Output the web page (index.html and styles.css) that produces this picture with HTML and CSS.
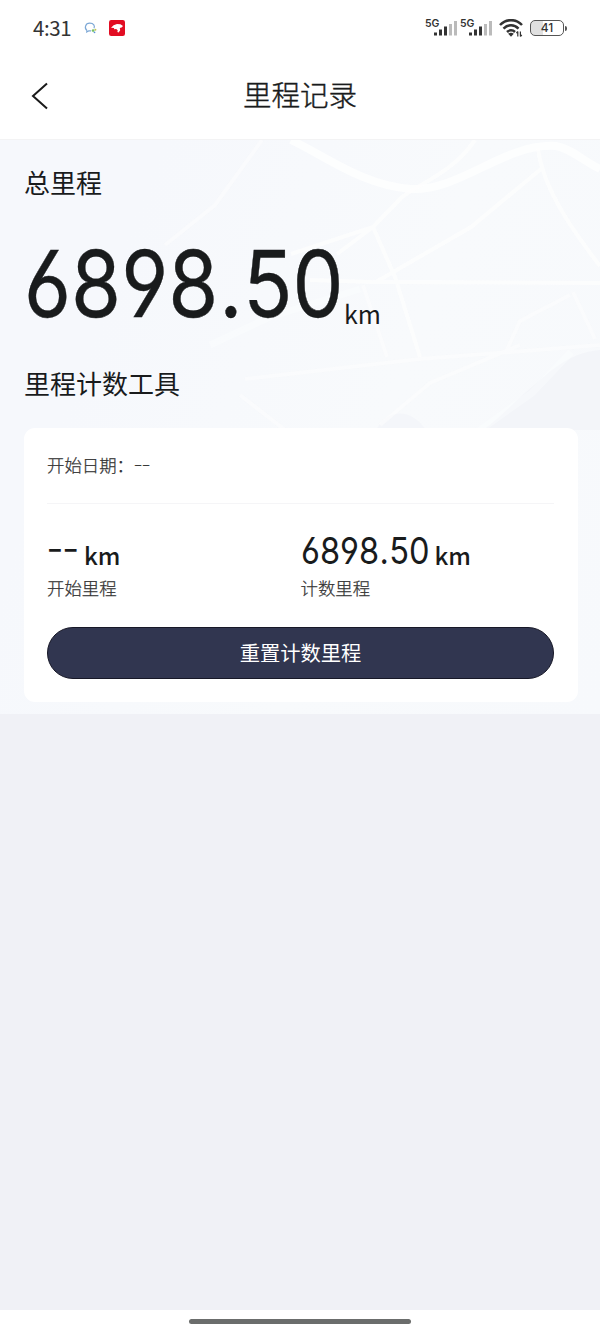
FILE: index.html
```
<!DOCTYPE html>
<html lang="zh-CN">
<head>
<meta charset="utf-8">
<title>里程记录</title>
<link rel="stylesheet" href="styles.css">
</head>
<body>
<div class="screen">
  <div class="status">
    <span class="time">4:31</span>
    <svg class="chat" width="13" height="12" viewBox="0 0 13 12" fill="none"><path d="M3 8.5C.2 6.5 1 1.2 5.8 1.2c4 0 5.3 2.6 4.2 5" stroke="#7da8d6" stroke-width="1.2"/><path d="M3 8.3 2.7 10l2-1.1h2.4" stroke="#7da8d6" stroke-width="1.1"/><circle cx="9.1" cy="8.6" r="1.3" fill="#76bf65"/><circle cx="11.4" cy="7.8" r="1" fill="#c4c454"/><circle cx="10.5" cy="10.3" r=".9" fill="#5b96d4"/></svg>
    <svg class="app" width="16" height="16" viewBox="0 0 16 16"><rect width="16" height="16" rx="2.2" fill="#e20d23"/><path d="M2 7.8 4.6 5.2 8 4l3.4.2L14 6l-1.4 1.5-1.8.4.4 2.4-1.6 2.2-1.2-.5.3-1.7-1.5-1.4-2.3.3.3-1.2z" fill="#fff"/></svg>
    <div class="radio">
      <div class="signal"><span>5G</span><svg width="24" height="20" viewBox="8 0 24 20"><g fill="#333"><rect x="9" y="14.5" width="3" height="3"/><rect x="14" y="11.5" width="3" height="6"/><rect x="19" y="8.5" width="3" height="9"/></g><g fill="#bbb"><rect x="24" y="6" width="3" height="11.5"/><rect x="29" y="3" width="3" height="14.5"/></g></svg></div>
      <div class="signal"><span>5G</span><svg width="24" height="20" viewBox="8 0 24 20"><g fill="#333"><rect x="9" y="14.5" width="3" height="3"/><rect x="14" y="11.5" width="3" height="6"/><rect x="19" y="8.5" width="3" height="9"/></g><g fill="#bbb"><rect x="24" y="6" width="3" height="11.5"/><rect x="29" y="3" width="3" height="14.5"/></g></svg></div>
    </div>
    <svg class="wifi" width="24" height="18" viewBox="0 0 24 18" fill="none" stroke="#333" stroke-width="2.5"><path d="M1 6C7-.5 17-.5 23 6M4.5 9.6c4.3-4.5 10.7-4.5 15 0M8 13c2.2-2.2 5.8-2.2 8 0"/><path d="m12 17.8-2.8-3c1.7-1.4 3.9-1.4 5.6 0z" fill="#333" stroke="none"/><path d="M18.8 17.5v-5m-1.4 1.7 1.4-1.7M21.4 12.5v5m1.4-1.7-1.4 1.7" stroke-width="1.2"/></svg>
    <div class="battery">41</div>
    <i class="cap"></i>
  </div>
  <header class="nav">
    <svg width="18" height="28" viewBox="0 0 18 28" fill="none" stroke="#1a1a1a" stroke-width="2"><path d="M16 1.5 2 14l14 12.5"/></svg>
    <h1>里程记录</h1>
  </header>
  <main class="panel">
    <svg class="map" width="600" height="290" viewBox="0 0 600 290" fill="none" stroke="#fdfefe" aria-hidden="true">
      <path d="M600 210c-35 3-53 25-75 43-14 12-25 25-42 37h117z" fill="#f3f5f9" stroke="none"/>
      <path d="M376 290c12-22 35-22 50 0z" fill="#f4f6fa" stroke="none"/>
      <path d="M291 0c36 17 71 45 120 49 50 2 93-46 145-43 16 3 27 15 44 23" stroke-width="8"/>
      <path d="M475 0c-22 32-51 41-73 57l-29 30-82 27M373 87l-36 27M373 87l22 50 25 80M600 143 372 142 310 140M376 142l95-55 70-58M538 8c5 44 42 92 62 118" stroke-width="4" opacity=".75"/>
      <path d="m363 145 24 72M570 155l-50 26-15 33M573 152l22 47M600 205l-180 14-175 20M262 0l-47 65-50 40M240 255l45 35M380 285l50-42 90-38" stroke-width="4" opacity=".5"/>
      <path d="m480 290 52-37 39-41M210 205l60-28 90-28" stroke-width="7" opacity=".35"/>
    </svg>
    <h2>总里程</h2>
    <div class="total"><span class="figure">6898<span class="dot">.</span>50</span><span class="unit">km</span></div>
    <h2>里程计数工具</h2>
    <section class="card">
      <p class="date">开始日期：<span>--</span></p>
      <div class="stats">
        <div><div class="value"><span class="none">--</span><b>km</b></div><p class="label">开始里程</p></div>
        <div><div class="value"><span class="number">6898<span class="dot">.</span>50</span><b>km</b></div><p class="label">计数里程</p></div>
      </div>
      <button class="reset">重置计数里程</button>
    </section>
  </main>
  <footer class="home"><i></i></footer>
</div>
</body>
</html>
```
FILE: styles.css
```
* { box-sizing: border-box; }
body, h1, h2, p { margin: 0; }
body { font-family: "Noto Sans CJK SC", sans-serif; color: #191b1c; }
.screen { width: 600px; height: 1333px; display: flex; flex-direction: column; background: #f0f1f6; overflow: hidden; }
.status { height: 56px; flex: none; display: flex; align-items: center; padding: 0 35px 0 33px; background: #fff; }
.time { width: 51px; margin-top: -2px; font-size: 20.5px; line-height: 30px; color: #333; letter-spacing: -.4px; }
.app { margin-left: 12px; }
.radio { display: flex; gap: 3px; margin-left: auto; }
.signal { width: 32px; display: flex; align-items: flex-start; }
.signal span { width: 8px; flex: none; margin-top: -3px; font: 600 10.5px/17px Inter, sans-serif; color: #333; }
.signal svg { flex: none; }
.wifi { margin: 0 7px 0 7px; }
.battery { width: 34px; height: 16px; border: 1.5px solid #555; border-radius: 5px; font: 500 12px/13px Inter, sans-serif; text-align: center; color: #333; background: linear-gradient(90deg, #e0e0e0 38%, #fff 38%); }
.cap { width: 2px; height: 5px; margin: 0 -2px 0 1px; background: #555; border-radius: 0 2px 2px 0; }
.nav { height: 84px; flex: none; display: grid; grid-template-columns: 60px 1fr 60px; background: #fff; border-bottom: 1px solid #f3f3f4; }
.nav svg { margin: 26px 0 0 31px; }
h1 { font-size: 28.5px; line-height: 42px; font-weight: 300; text-align: center; padding-top: 17px; -webkit-text-stroke: .4px; }
.panel { position: relative; height: 574px; flex: none; padding: 23px 22px 0 24px; background: linear-gradient(110deg, #f6f8fc 20%, #f8fafc 60%, #f7f9fc); }
.panel > * { position: relative; }
.panel > .map { position: absolute; top: 0; left: 0; }
h2 { font-size: 26px; line-height: 38px; font-weight: 400; }
.total { height: 163px; display: flex; line-height: 163px; }
.figure, .number { font-family: Inter, sans-serif; font-feature-settings: "cv03", "cv04"; transform: scaleX(.88); transform-origin: left; white-space: nowrap; }
.dot { margin: 0 .01em; }
.figure { width: 320px; padding-top: 1px; font-size: 92px; -webkit-text-stroke: .4px; }
.unit { font-size: 25px; padding-top: 31px; }
.card { height: 274px; margin-top: 26px; padding: 0 24px 0 23px; border-radius: 11px; background: #fff; }
.date { height: 76px; padding-top: 24px; font-size: 17.4px; line-height: 26px; font-weight: 300; border-bottom: 1px solid #f5f5f7; color: #333; -webkit-text-stroke: .25px; }
.date span { display: inline-block; transform: scaleX(1.4) translateY(-2px); transform-origin: left; }
.stats { display: grid; grid-template-columns: 1fr 1fr; height: 123px; padding-top: 24px; }
.value { height: 47px; display: flex; line-height: 47px; }
.value b { font-size: 24px; line-height: 53px; font-weight: 500; }
.none { width: 37px; font-size: 38px; line-height: 34px; transform: scaleX(1.2); transform-origin: left; }
.number { width: 134px; font-size: 37px; line-height: 46px; }
.label { font-size: 17.4px; line-height: 26px; font-weight: 300; color: #333; -webkit-text-stroke: .25px; }
.reset { display: block; width: 100%; height: 52px; padding: 0 0 3px; border: 1.5px solid #171827; border-radius: 26px; background: #313650; color: #fff; font: 400 20.3px/46px "Noto Sans CJK SC", sans-serif; }
.home { height: 23px; flex: none; margin-top: auto; padding-top: 9px; background: #fff; }
.home i { display: block; width: 222px; height: 5px; margin: 0 auto; border-radius: 3px; background: #6b6d6c; }
```
